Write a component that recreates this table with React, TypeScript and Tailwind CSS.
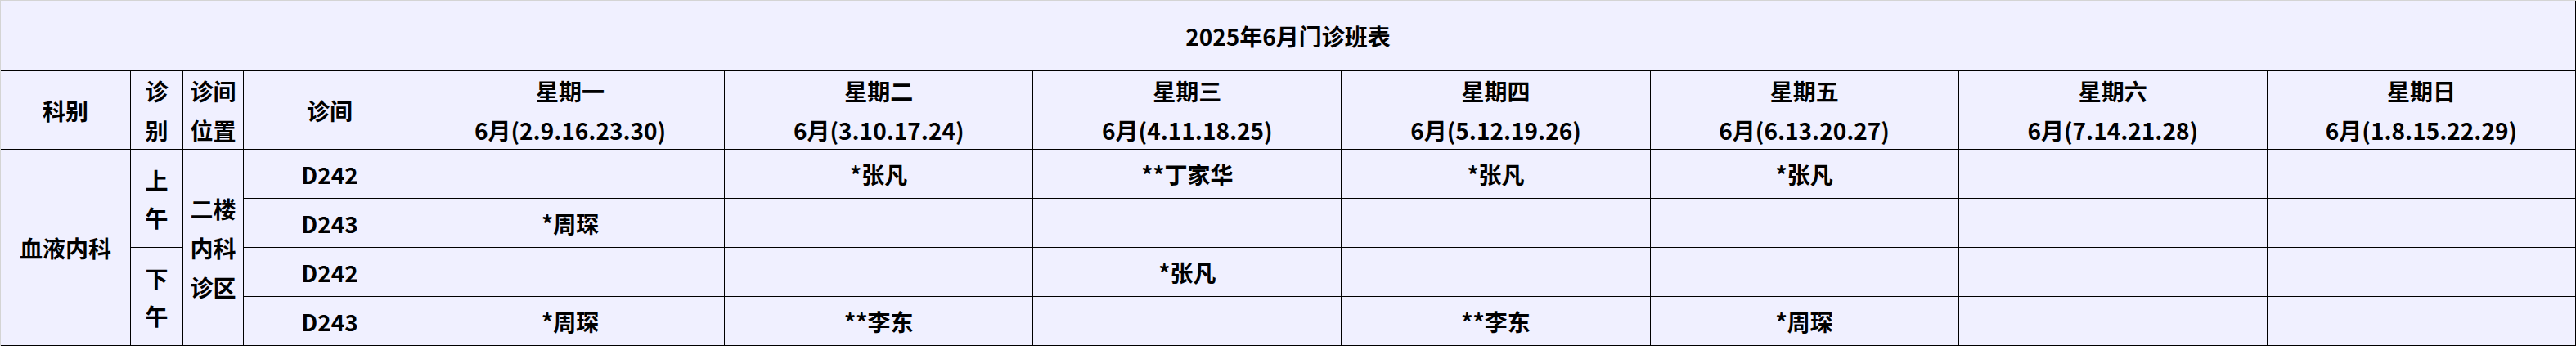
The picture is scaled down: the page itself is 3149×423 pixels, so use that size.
import React from "react";

const days = [
  { name: "星期一", dates: "6月(2.9.16.23.30)" },
  { name: "星期二", dates: "6月(3.10.17.24)" },
  { name: "星期三", dates: "6月(4.11.18.25)" },
  { name: "星期四", dates: "6月(5.12.19.26)" },
  { name: "星期五", dates: "6月(6.13.20.27)" },
  { name: "星期六", dates: "6月(7.14.21.28)" },
  { name: "星期日", dates: "6月(1.8.15.22.29)" },
];

const rows: { room: string; cells: string[] }[] = [
  { room: "D242", cells: ["", "*张凡", "**丁家华", "*张凡", "*张凡", "", ""] },
  { room: "D243", cells: ["*周琛", "", "", "", "", "", ""] },
  { room: "D242", cells: ["", "", "*张凡", "", "", "", ""] },
  { room: "D243", cells: ["*周琛", "**李东", "", "**李东", "*周琛", "", ""] },
];

const rowStart = ["row-start-3", "row-start-4", "row-start-5", "row-start-6"];
const dayCol = [
  "col-start-5",
  "col-start-6",
  "col-start-7",
  "col-start-8",
  "col-start-9",
  "col-start-10",
  "col-start-11",
];

const cell =
  "border-r border-b border-black flex items-center justify-center text-center";

export default function App() {
  return (
    <div
      className="w-[3149px] h-[423px] bg-[#f0f0ff] border-t border-l border-[#d4d4d4] text-black font-bold text-[28px] leading-[48px]"
      style={{ fontFamily: '"Noto Sans CJK SC", "Noto Sans", sans-serif' }}
    >
      <div className="grid grid-cols-[159px_64px_74px_211px_repeat(7,1fr)] grid-rows-[86px_96px_60px_60px_60px_60px]">
        <div className={`${cell} col-span-11 row-start-1 col-start-1`}>
          2025年6月门诊班表
        </div>

        <div className={`${cell} row-start-2 col-start-1`}>科别</div>
        <div className={`${cell} row-start-2 col-start-2 flex-col`}>
          <span>诊</span>
          <span>别</span>
        </div>
        <div className={`${cell} row-start-2 col-start-3 flex-col`}>
          <span>诊间</span>
          <span>位置</span>
        </div>
        <div className={`${cell} row-start-2 col-start-4`}>诊间</div>
        {days.map((d, i) => (
          <div key={d.name} className={`${cell} row-start-2 ${dayCol[i]} flex-col`}>
            <span>{d.name}</span>
            <span>{d.dates}</span>
          </div>
        ))}

        <div className={`${cell} row-start-3 row-span-4 col-start-1`}>血液内科</div>
        <div className={`${cell} row-start-3 row-span-2 col-start-2 flex-col leading-[46px]`}>
          <span>上</span>
          <span>午</span>
        </div>
        <div className={`${cell} row-start-5 row-span-2 col-start-2 flex-col leading-[46px]`}>
          <span>下</span>
          <span>午</span>
        </div>
        <div className={`${cell} row-start-3 row-span-4 col-start-3 flex-col`}>
          <span>二楼</span>
          <span>内科</span>
          <span>诊区</span>
        </div>

        {rows.map((r, ri) => (
          <React.Fragment key={ri}>
            <div className={`${cell} ${rowStart[ri]} col-start-4`}>{r.room}</div>
            {r.cells.map((c, ci) => (
              <div key={ci} className={`${cell} ${rowStart[ri]} ${dayCol[ci]}`}>
                {c}
              </div>
            ))}
          </React.Fragment>
        ))}
      </div>
    </div>
  );
}
